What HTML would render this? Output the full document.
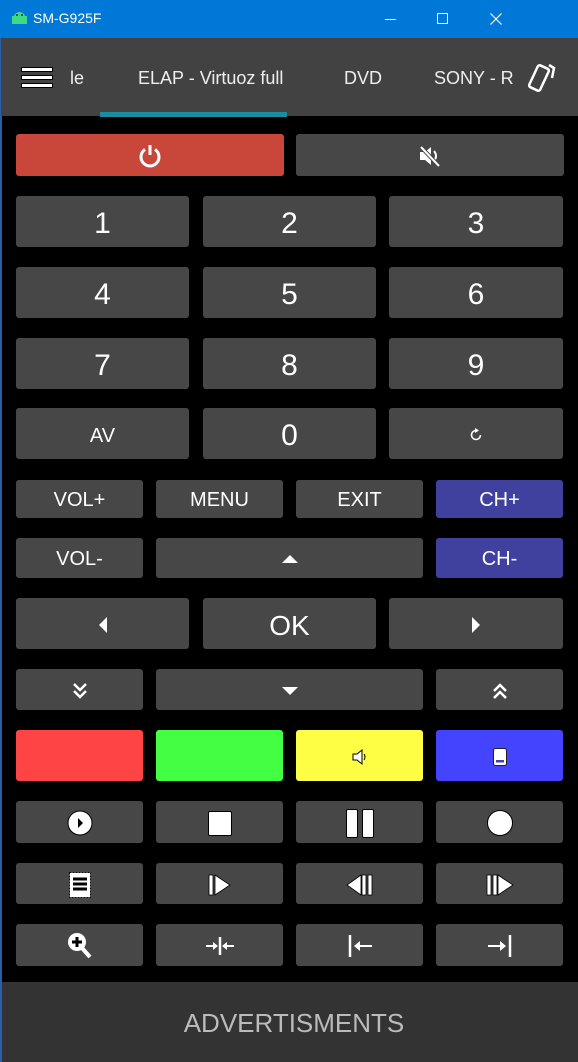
<!DOCTYPE html>
<html><head><meta charset="utf-8"><style>
*{margin:0;padding:0;box-sizing:border-box}
body{width:578px;height:1062px;background:#000;position:relative;overflow:hidden;font-family:"Liberation Sans",sans-serif;color:#fff}
.b{position:absolute;background:#474747;border-radius:3px;display:flex;align-items:center;justify-content:center;font-size:20px;padding-top:2px}
.n{font-size:30px;padding-top:5px}
.tb{position:absolute;left:0;top:0;width:578px;height:38px;background:#0078d7}
.tab{position:absolute;left:1px;top:38px;width:577px;height:78px;background:#424242}
.t{position:absolute;top:68px;font-size:18px;color:#eee}
svg{display:block}
</style></head><body>
<div class="tb">
<svg style="position:absolute;left:11px;top:11px" width="17" height="14"><rect x="1" y="5" width="15" height="8" fill="#3ddc84"/><path d="M3 6 A5.5 5 0 0 1 14 6Z" fill="#3ddc84"/><circle cx="6" cy="4" r="0.9" fill="#000"/><circle cx="11" cy="4" r="0.9" fill="#000"/></svg>
<div style="position:absolute;left:33px;top:10px;font-size:14px;color:#fff">SM-G925F</div>
<div style="position:absolute;left:385px;top:19px;width:11px;height:1px;background:#fff"></div>
<div style="position:absolute;left:437px;top:13px;width:11px;height:11px;border:1px solid #fff"></div>
<svg style="position:absolute;left:490px;top:13px" width="12" height="12"><path d="M0.5 0.5L11.5 11.5M11.5 0.5L0.5 11.5" stroke="#fff" stroke-width="1.2"/></svg>
</div>
<div style="position:absolute;left:0;top:38px;width:2px;height:1024px;background:#2a5fa8"></div>
<div class="tab"></div>
<svg style="position:absolute;left:21px;top:67px" width="32" height="22"><rect x="0.5" y="0.5" width="31" height="4" fill="#fff" stroke="#000"/><rect x="0.5" y="8.5" width="31" height="4" fill="#fff" stroke="#000"/><rect x="0.5" y="16.5" width="31" height="4" fill="#fff" stroke="#000"/></svg>
<div class="t" style="left:70px">le</div>
<div class="t" style="left:138px">ELAP - Virtuoz full</div>
<div class="t" style="left:344px">DVD</div>
<div class="t" style="left:434px">SONY - R</div>
<svg style="position:absolute;left:524px;top:60px" width="36" height="36"><rect x="9" y="6" width="12" height="24" rx="2" transform="rotate(25 15 18)" fill="none" stroke="#fff" stroke-width="2.5"/><path d="M25 5 L30 8 L28 18" stroke="#fff" stroke-width="2.5" fill="none"/></svg>
<div style="position:absolute;left:100px;top:112px;width:187px;height:5px;background:#1a8da0"></div>

<div class="b" style="left:16px;top:134px;width:268px;height:42px;background:#c9473a"><svg width="28" height="28" viewBox="0 0 28 28"><path d="M9 7.5A9 9 0 1 0 19 7.5" fill="none" stroke="#fff" stroke-width="3"/><path d="M14 3V13" stroke="#fff" stroke-width="3"/></svg></div>
<div class="b" style="left:296px;top:134px;width:268px;height:42px"><svg width="26" height="26" viewBox="0 0 26 26"><path d="M3 9H8L14 4V22L8 17H3Z" fill="#fff"/><path d="M17 8Q21 13 17 18" stroke="#fff" stroke-width="2" fill="none"/><path d="M4 4L22 23" stroke="#474747" stroke-width="4"/><path d="M4 4L22 23" stroke="#fff" stroke-width="2"/></svg></div>

<div class="b n" style="left:16px;top:196px;width:173px;height:51px">1</div>
<div class="b n" style="left:203px;top:196px;width:173px;height:51px">2</div>
<div class="b n" style="left:389px;top:196px;width:174px;height:51px">3</div>
<div class="b n" style="left:16px;top:267px;width:173px;height:51px">4</div>
<div class="b n" style="left:203px;top:267px;width:173px;height:51px">5</div>
<div class="b n" style="left:389px;top:267px;width:174px;height:51px">6</div>
<div class="b n" style="left:16px;top:338px;width:173px;height:51px">7</div>
<div class="b n" style="left:203px;top:338px;width:173px;height:51px">8</div>
<div class="b n" style="left:389px;top:338px;width:174px;height:51px">9</div>
<div class="b" style="left:16px;top:408px;width:173px;height:51px;padding-top:5px">AV</div>
<div class="b n" style="left:203px;top:408px;width:173px;height:51px">0</div>
<div class="b" style="left:389px;top:408px;width:174px;height:51px"><svg width="14" height="14" viewBox="0 0 14 14"><path d="M11.5 7A4.5 4.5 0 1 1 7 2.5" fill="none" stroke="#fff" stroke-width="1.6"/><path d="M6 0L10 2.5L6 5Z" fill="#fff"/></svg></div>

<div class="b" style="left:16px;top:480px;width:127px;height:38px">VOL+</div>
<div class="b" style="left:156px;top:480px;width:127px;height:38px">MENU</div>
<div class="b" style="left:296px;top:480px;width:127px;height:38px">EXIT</div>
<div class="b" style="left:436px;top:480px;width:127px;height:38px;background:#40409e">CH+</div>
<div class="b" style="left:16px;top:538px;width:127px;height:40px">VOL-</div>
<div class="b" style="left:156px;top:538px;width:267px;height:40px"><svg width="18" height="10"><path d="M1 9L9 1L17 9Z" fill="#fff"/></svg></div>
<div class="b" style="left:436px;top:538px;width:127px;height:40px;background:#40409e">CH-</div>

<div class="b" style="left:16px;top:598px;width:173px;height:51px"><svg width="10" height="18"><path d="M9 1L1 9L9 17Z" fill="#fff"/></svg></div>
<div class="b n" style="left:203px;top:598px;width:173px;height:51px;font-size:28px">OK</div>
<div class="b" style="left:389px;top:598px;width:174px;height:51px"><svg width="10" height="18"><path d="M1 1L9 9L1 17Z" fill="#fff"/></svg></div>

<div class="b" style="left:16px;top:669px;width:127px;height:41px"><svg width="16" height="18"><path d="M2 2L8 8L14 2M2 9L8 15L14 9" stroke="#fff" stroke-width="2.5" fill="none"/></svg></div>
<div class="b" style="left:156px;top:669px;width:267px;height:41px"><svg width="18" height="10"><path d="M1 1L9 9L17 1Z" fill="#fff"/></svg></div>
<div class="b" style="left:436px;top:669px;width:127px;height:41px"><svg width="16" height="18"><path d="M2 9L8 3L14 9M2 16L8 10L14 16" stroke="#fff" stroke-width="2.5" fill="none"/></svg></div>

<div class="b" style="left:16px;top:730px;width:127px;height:51px;background:#fe4444"></div>
<div class="b" style="left:156px;top:730px;width:127px;height:51px;background:#44fe44"></div>
<div class="b" style="left:296px;top:730px;width:127px;height:51px;background:#fefe44"><svg width="16" height="18"><path d="M1 6H5L10 2V16L5 12H1Z" fill="#fff" stroke="#000" stroke-width="1"/><path d="M12 6Q14 9 12 12" stroke="#000" fill="none"/></svg></div>
<div class="b" style="left:436px;top:730px;width:127px;height:51px;background:#4444fe"><svg width="16" height="20"><rect x="1.5" y="1.5" width="13" height="17" rx="2" fill="#fff" stroke="#222"/><rect x="4" y="13" width="8" height="2.5" fill="#4444a0"/></svg></div>

<div class="b" style="left:16px;top:801px;width:127px;height:42px"><svg width="26" height="26"><circle cx="13" cy="13" r="12" fill="#fff" stroke="#000"/><path d="M11 8L16 13L11 18Z" fill="#000"/></svg></div>
<div class="b" style="left:156px;top:801px;width:127px;height:42px"><div style="width:24px;height:25px;background:#fff;border-radius:2px;border:1px solid #000"></div></div>
<div class="b" style="left:296px;top:801px;width:127px;height:42px"><div style="width:12px;height:29px;background:#fff;border:1px solid #000;border-radius:2px;margin-right:4px"></div><div style="width:12px;height:29px;background:#fff;border:1px solid #000;border-radius:2px"></div></div>
<div class="b" style="left:436px;top:801px;width:127px;height:42px"><div style="width:26px;height:26px;background:#fff;border-radius:50%;border:1px solid #000"></div></div>

<div class="b" style="left:16px;top:863px;width:127px;height:41px"><svg width="24" height="28"><rect x="1.5" y="1.5" width="21" height="25" fill="#fff" stroke="#000" stroke-dasharray="2 1"/><path d="M5 8H19M5 13H19M5 18H19" stroke="#000" stroke-width="3"/></svg></div>
<div class="b" style="left:156px;top:863px;width:127px;height:41px"><svg width="24" height="24"><rect x="1" y="2" width="4" height="20" fill="#fff" stroke="#000" stroke-width=".8"/><path d="M7 2L22 12L7 22Z" fill="#fff" stroke="#000" stroke-width=".8"/></svg></div>
<div class="b" style="left:296px;top:863px;width:127px;height:41px"><svg width="28" height="24"><path d="M15 2L1 12L15 22Z" fill="#fff" stroke="#000" stroke-width=".8"/><rect x="16" y="2" width="4" height="20" fill="#fff" stroke="#000" stroke-width=".8"/><rect x="22" y="2" width="4" height="20" fill="#fff" stroke="#000" stroke-width=".8"/></svg></div>
<div class="b" style="left:436px;top:863px;width:127px;height:41px"><svg width="28" height="24"><rect x="1" y="2" width="4" height="20" fill="#fff" stroke="#000" stroke-width=".8"/><rect x="7" y="2" width="4" height="20" fill="#fff" stroke="#000" stroke-width=".8"/><path d="M12 2L27 12L12 22Z" fill="#fff" stroke="#000" stroke-width=".8"/></svg></div>

<div class="b" style="left:16px;top:924px;width:127px;height:42px"><svg width="26" height="28"><path d="M15 16L23 25" stroke="#fff" stroke-width="4"/><circle cx="10" cy="10" r="9" fill="#fff"/><path d="M10 5V15M5 10H15" stroke="#000" stroke-width="3"/></svg></div>
<div class="b" style="left:156px;top:924px;width:127px;height:42px"><svg width="30" height="20"><path d="M15 1V19" stroke="#fff" stroke-width="2.5"/><path d="M1 10H10M29 10H20" stroke="#fff" stroke-width="2"/><path d="M8 6L13 10L8 14Z M22 6L17 10L22 14Z" fill="#fff"/></svg></div>
<div class="b" style="left:296px;top:924px;width:127px;height:42px"><svg width="26" height="26"><path d="M3 2V24" stroke="#fff" stroke-width="2.5"/><path d="M9 13H25" stroke="#fff" stroke-width="2"/><path d="M13 8L7 13L13 18Z" fill="#fff"/></svg></div>
<div class="b" style="left:436px;top:924px;width:127px;height:42px"><svg width="26" height="26"><path d="M23 2V24" stroke="#fff" stroke-width="2.5"/><path d="M1 13H17" stroke="#fff" stroke-width="2"/><path d="M13 8L19 13L13 18Z" fill="#fff"/></svg></div>

<div style="position:absolute;left:2px;top:982px;width:576px;height:80px;background:#333;display:flex;align-items:center;justify-content:center;color:#bbb;font-size:26px;padding-top:2px;padding-left:8px">ADVERTISMENTS</div>
</body></html>
